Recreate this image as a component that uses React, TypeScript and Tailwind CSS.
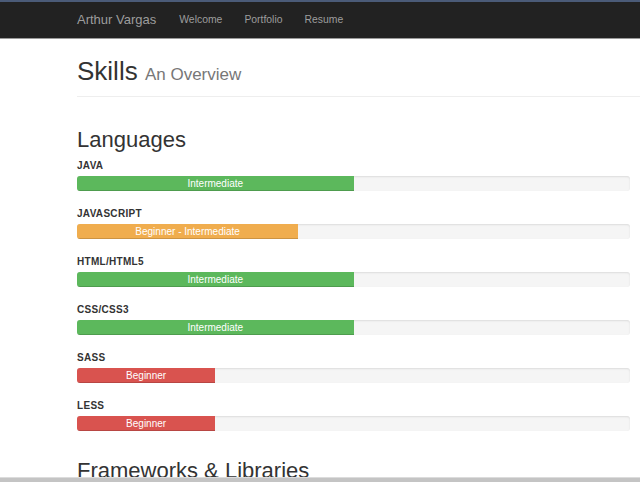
type Skill = {
  name: string;
  level: string;
  pct: number;
  color: string;
};

const languages: Skill[] = [
  { name: 'JAVA', level: 'Intermediate', pct: 50, color: 'bg-[#5cb85c]' },
  { name: 'JAVASCRIPT', level: 'Beginner - Intermediate', pct: 40, color: 'bg-[#f0ad4e]' },
  { name: 'HTML/HTML5', level: 'Intermediate', pct: 50, color: 'bg-[#5cb85c]' },
  { name: 'CSS/CSS3', level: 'Intermediate', pct: 50, color: 'bg-[#5cb85c]' },
  { name: 'SASS', level: 'Beginner', pct: 25, color: 'bg-[#d9534f]' },
  { name: 'LESS', level: 'Beginner', pct: 25, color: 'bg-[#d9534f]' },
];

function SkillBar({ skill }: { skill: Skill }) {
  return (
    <div className="mb-[16px]">
      <div className="h-[14px] text-[10px] leading-[14px] font-bold tracking-[0.3px] text-[#333]">
        {skill.name}
      </div>
      <div className="mt-[3px] flex h-[15px] overflow-hidden rounded-[3px] bg-[#f5f5f5] shadow-[inset_0_1px_2px_rgba(0,0,0,0.1)]">
        <div
          className={`${skill.color} flex h-full items-center justify-center text-[10px] leading-[15px] text-white shadow-[inset_0_-1px_0_rgba(0,0,0,0.15)]`}
          style={{ width: `${skill.pct}%` }}
        >
          {skill.level}
        </div>
      </div>
    </div>
  );
}

export default function App() {
  return (
    <div className="flex h-[482px] flex-col overflow-hidden bg-white font-['Liberation_Sans',Arial,sans-serif]">
      {/* navbar */}
      <div className="h-[2px] bg-[#4b5b78]" />
      <nav className="flex h-[37px] items-center border-b border-[#9a9a9a] bg-[#222] pl-[77px] text-[#9d9d9d]">
        <span className="mr-[23px] text-[13px]">Arthur Vargas</span>
        <span className="mr-[22px] text-[10.4px]">Welcome</span>
        <span className="mr-[22px] text-[10.4px]">Portfolio</span>
        <span className="text-[10.4px]">Resume</span>
      </nav>

      <main className="flex-1 overflow-hidden pl-[77px]">
        <div className="mt-[18px] border-b border-[#eee] pb-[7px]">
          <h1 className="text-[26px] leading-[29px] text-[#333]">
            Skills <small className="text-[17px] text-[#777]">An Overview</small>
          </h1>
        </div>

        <div className="pr-[10px]">
          <h2 className="mt-[30px] mb-[7px] text-[22px] leading-[25px] text-[#333]">Languages</h2>
          {languages.map((s) => (
            <SkillBar key={s.name} skill={s} />
          ))}
          <h2 className="mt-[27px] text-[22px] leading-[25px] text-[#333]">Frameworks &amp; Libraries</h2>
        </div>
      </main>

      {/* scrollbar strip */}
      <div className="h-[5px] border-t border-[#dcdcdc] bg-[#c4c4c4]" />
    </div>
  );
}
